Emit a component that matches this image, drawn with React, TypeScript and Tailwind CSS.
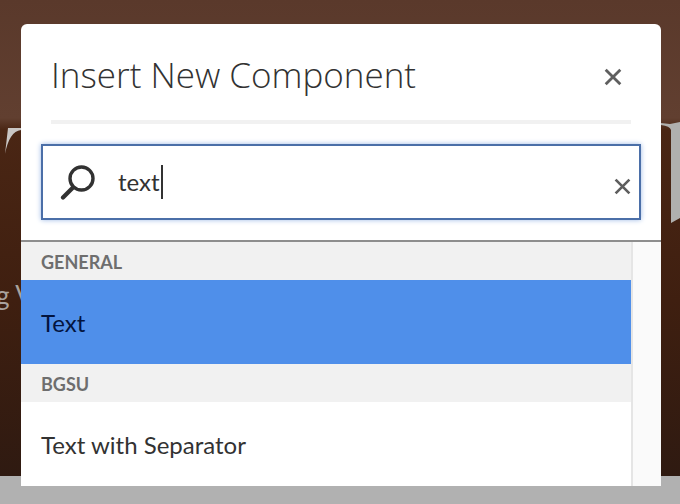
const font = { fontFamily: 'Lato, "Open Sans", sans-serif' };
const heading = { fontFamily: '"Open Sans", "Noto Sans", sans-serif' };

function CloseIcon({ size }: { size: number }) {
  return (
    <svg width={size} height={size} viewBox="0 0 16 16" fill="none" stroke="#5f5f5f" strokeWidth="2.5" strokeLinecap="butt">
      <path d="M1.5 1.5 14.5 14.5M14.5 1.5 1.5 14.5" />
    </svg>
  );
}

function SearchIcon() {
  return (
    <svg width="36" height="36" viewBox="0 0 36 36" fill="none" stroke="#323232" strokeLinecap="round">
      <circle cx="21.5" cy="14.5" r="11.5" strokeWidth="3.4" />
      <path d="M13 23.5 3 33.5" strokeWidth="4.2" />
    </svg>
  );
}

function Backdrop() {
  return (
    <div className="absolute inset-0 bg-[#b1b1b1]">
      <div className="h-[476px] bg-[linear-gradient(180deg,#5a392b_0px,#613f30_118px,#4a2614_130px,#3f1f10_300px,#2f1a11_476px)]" />
      <svg className="absolute left-0 top-[125px]" width="21" height="32" viewBox="0 0 21 32">
        <path d="M8 3 21 3V5C13 6 8 14 5 29Z" fill="#c9c6c4" />
      </svg>
      <svg className="absolute right-0 top-[120px]" width="19" height="106" viewBox="0 0 19 106">
        <path d="M0 3 9 4 19 2V98L10 103V10Q9 6 0 5Z" fill="#b0b0ae" />
      </svg>
      <span className="absolute left-[-4px] top-[276px] whitespace-pre text-[26px] text-[#a9a29d]" style={font}>g V</span>
    </div>
  );
}

export default function App() {
  return (
    <div className="relative h-[504px] w-[680px] overflow-hidden" style={font}>
      <Backdrop />
      <div className="absolute left-[21px] top-[24px] flex h-[462px] w-[640px] flex-col overflow-hidden rounded-t-[6px] bg-white">
        <div className="flex h-[100px] shrink-0 flex-col px-[30px]">
          <div className="flex h-[96px] items-center justify-between">
            <h1 className="mt-[5px] text-[35px] font-light leading-none text-[#323232]" style={heading}>Insert New Component</h1>
            <button className="mr-[9px] mt-[10px]"><CloseIcon size={18} /></button>
          </div>
          <div className="h-[4px] bg-[#f1f1f1]" />
        </div>
        <div className="flex h-[116px] shrink-0 items-start px-[20px] pt-[20px]">
          <div className="flex h-[76px] w-[600px] items-center border-2 border-[#4b6fa8] pl-[17px] pr-[8px] shadow-[0_0_5px_#9db9e6]">
            <SearchIcon />
            <span className="ml-[22px] text-[24px] leading-none text-[#323232]">text</span>
            <span className="ml-[1px] h-[34px] w-[2px] bg-[#323232]" />
            <span className="ml-auto mt-[8px]"><CloseIcon size={17} /></span>
          </div>
        </div>
        <div className="flex min-h-0 flex-1 border-t-2 border-[#8e8e8e]">
          <div className="w-[612px] border-r-2 border-[#e5e5e5]">
            <div className="flex h-[38px] items-center bg-[#f1f1f1] px-[20px] pt-[2px] text-[18px] font-bold text-[#6e6e6e]">GENERAL</div>
            <div className="flex h-[84px] items-center bg-[#4f8fea] px-[20px] pt-[2px] text-[24px] text-[#03143f]">Text</div>
            <div className="flex h-[38px] items-center bg-[#f1f1f1] px-[20px] pt-[2px] text-[18px] font-bold text-[#6e6e6e]">BGSU</div>
            <div className="flex h-[84px] items-center bg-white px-[20px] pt-[2px] text-[24px] text-[#323232]">Text with Separator</div>
          </div>
          <div className="flex-1 bg-[#fafafa]" />
        </div>
      </div>
    </div>
  );
}
